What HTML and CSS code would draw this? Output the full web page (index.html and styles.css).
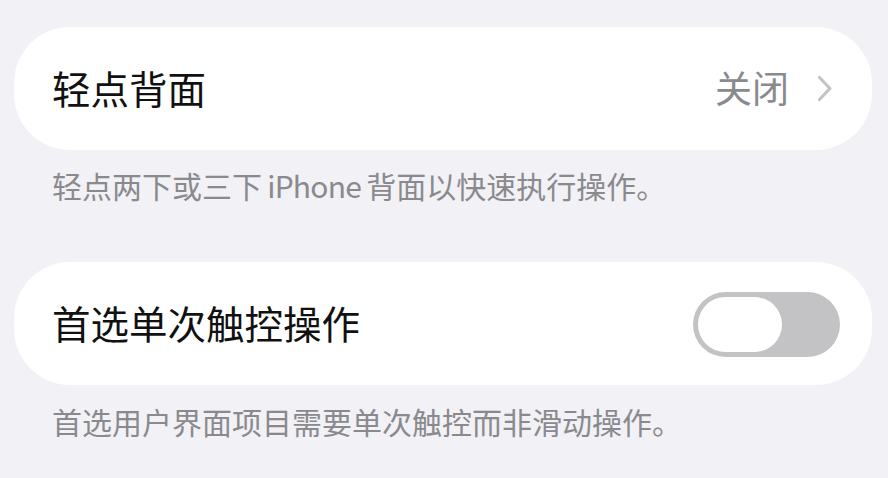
FILE: index.html
```html
<!DOCTYPE html>
<html lang="zh-CN">
<head>
<meta charset="utf-8">
<link rel="stylesheet" href="styles.css">
</head>
<body>
<div class="page">
  <div class="card">
    <span class="title">轻点背面</span>
    <span class="value">关闭<svg class="chev" width="16" height="27" viewBox="0 0 16 27"><path d="M2.5 2.5 L13 13.5 L2.5 24.5" fill="none" stroke="#c4c4c8" stroke-width="3.2" stroke-linecap="round" stroke-linejoin="round"/></svg></span>
  </div>
  <p class="caption">轻点两下或三下 <span class="latin">iPhone</span> 背面以快速执行操作。</p>
  <div class="card card2">
    <span class="title">首选单次触控操作</span>
    <span class="toggle"><span class="knob"></span></span>
  </div>
  <p class="caption caption2">首选用户界面项目需要单次触控而非滑动操作。</p>
</div>
</body>
</html>
```
FILE: styles.css
```css
html, body {
  margin: 0;
  padding: 0;
  background: #f1f1f6;
}
body {
  font-family: "Noto Sans CJK SC", "Noto Sans", sans-serif;
}
.page {
  padding: 27px 16px 0 14px;
  width: 858px;
}
.card {
  height: 123px;
  background: #ffffff;
  border-radius: 56px;
  display: flex;
  align-items: center;
  justify-content: space-between;
  padding: 0 39px 0 38px;
  box-sizing: border-box;
}
.title {
  font-size: 38.5px;
  color: #111111;
  line-height: 50px;
  margin-top: -4px;
}
.value {
  display: flex;
  align-items: center;
  font-size: 37px;
  color: #8a8a8e;
  line-height: 50px;
  margin-top: -3px;
}
.chev {
  margin-left: 28px;
  margin-top: 3px;
}
.caption {
  margin: 17px 0 0 0;
  padding-left: 38px;
  font-size: 30px;
  line-height: 36px;
  color: #8a8a8e;
  height: 36px;
  white-space: nowrap;
}
.caption .latin {
  letter-spacing: -0.8px;
  margin: 0 -1.5px;
}
.card2 {
  margin-top: 59px;
  padding-right: 32px;
}
.caption2 {
  margin-top: 18px;
}
.toggle {
  width: 147px;
  height: 65px;
  border-radius: 33px;
  background: #c3c3c5;
  box-sizing: border-box;
  padding: 5px;
  display: flex;
  margin-top: 1px;
}
.knob {
  width: 84px;
  height: 55px;
  border-radius: 28px;
  background: #ffffff;
}
```
